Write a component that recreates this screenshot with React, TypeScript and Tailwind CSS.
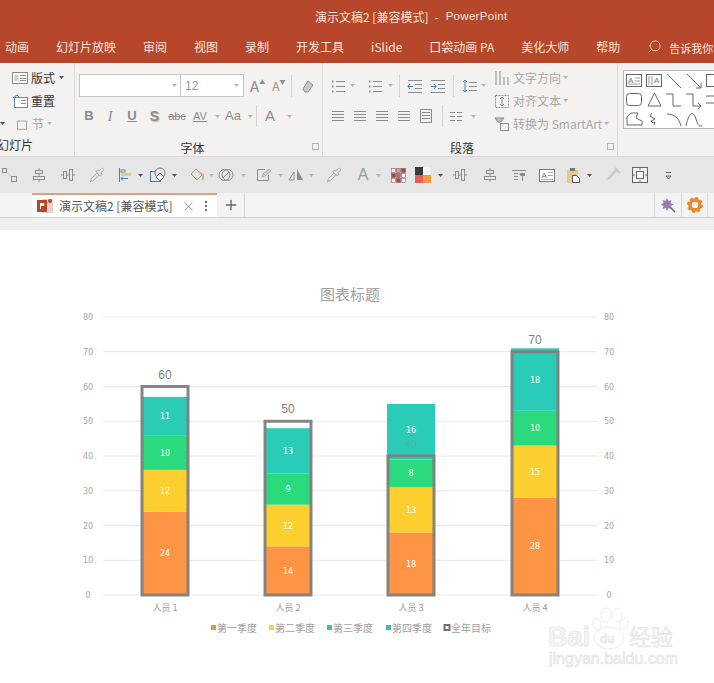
import type { ReactNode } from "react";
import { MoreVertical, Pipette, Plus, Search, X } from "lucide-react";

const CJK = "font-['Noto_Sans_CJK_SC','Liberation_Sans',sans-serif]";

const TABS = ["动画", "幻灯片放映", "审阅", "视图", "录制", "开发工具", "iSlide", "口袋动画 PA", "美化大师", "帮助"];

// ── tiny ribbon glyphs ──
function Glyph({ children, size = 16 }: { children: ReactNode; size?: number }) {
  return (
    <svg width={size} height={size} viewBox="0 0 16 16" fill="none" stroke="#8c8c8c" strokeWidth="1" className="shrink-0">
      {children}
    </svg>
  );
}

function Caret({ dark }: { dark?: boolean }) {
  return (
    <svg width="5" height="3" viewBox="0 0 5 3" className="shrink-0">
      <path d="M0 0h5L2.5 3z" fill={dark ? "#555" : "#b4b4b4"} />
    </svg>
  );
}

function Lines({ x = 2, w = 12, ys = [3, 6, 9, 12] }: { x?: number; w?: number; ys?: number[] }) {
  return <path d={ys.map((y) => `M${x} ${y + 0.5}h${w}`).join("")} />;
}

const AlignIcon = () => (
  <Glyph>
    <Lines />
  </Glyph>
);
const ListIcon = () => (
  <Glyph>
    <path d="M6 3.5h9M6 8.5h9M6 13.5h9" />
    <path d="M2 3.5h1.5M2 8.5h1.5M2 13.5h1.5" strokeWidth="2" />
  </Glyph>
);
const IndentIcon = ({ flip }: { flip?: boolean }) => (
  <Glyph>
    <path d="M1 2.5h14M8 6.5h7M8 10.5h7M1 14.5h14" />
    <path d={flip ? "M1 8.5h5M4 6l2 2.5L4 11" : "M6 8.5H1M3 6L1 8.5 3 11"} stroke="#4a7fa8" />
  </Glyph>
);
const BoxDots = () => (
  <Glyph>
    <rect x="0.500" y="1.500" width="4" height="4" />
    <rect x="9.500" y="9.500" width="5" height="5" />
    <path d="M5 6l4 3" stroke="#c8c8c8" />
  </Glyph>
);
const AlignCenterV = () => (
  <Glyph>
    <path d="M8 1v14" />
    <rect x="4.500" y="3.500" width="7" height="3" fill="#e6e6e6" />
    <rect x="2.500" y="9.500" width="11" height="3" fill="#e6e6e6" />
  </Glyph>
);
const AlignCenterH = () => (
  <Glyph>
    <path d="M1 8h14" />
    <rect x="3.500" y="4.500" width="3" height="7" fill="#e6e6e6" />
    <rect x="9.500" y="2.500" width="3" height="11" fill="#e6e6e6" />
  </Glyph>
);
const Drop = () => <Pipette size={16} strokeWidth={1} color="#8c8c8c" className="shrink-0" />;

function Cell({ w, children }: { w: number | string; children?: ReactNode }) {
  return (
    <div className="flex shrink-0 items-center justify-center gap-[3px]" style={{ width: w }}>
      {children}
    </div>
  );
}

function Sep({ h = "h-[22px]" }: { h?: string }) {
  return <div className={`w-px shrink-0 bg-[#d4d4d4] ${h}`} />;
}

function GroupLabel({ children }: { children: ReactNode }) {
  return (
    <div className="relative mt-[12px] flex h-[17px] items-center justify-center pr-[16px] text-[12px] leading-[17px] text-[#333]">
      {children}
      <span className="absolute right-[3px] top-[4px] h-[7px] w-[7px] border border-[#b5b5b5]" />
    </div>
  );
}

function Ribbon() {
  return (
    <div className={`flex h-[93px] shrink-0 overflow-hidden bg-[#f3f2f1] ${CJK}`}>
      {/* slides group */}
      <div className="relative flex w-[75px] shrink-0 flex-col border-r border-[#d9d9d9] pt-[3px] text-[12px] leading-[23px] text-[#333]">
        <div className="flex h-[23px] shrink-0 items-center gap-1 pl-[12px]">
          <Glyph>
            <rect x="0.500" y="2.500" width="15" height="11" fill="#fff" />
            <rect x="2.500" y="5" width="4" height="6" fill="#ccc" stroke="none" />
            <Lines x={8} w={6} ys={[5, 8, 10]} />
          </Glyph>
          <span className="-ml-[1px]">版式</span>
          <Caret dark />
        </div>
        <div className="flex h-[23px] shrink-0 items-center gap-1 pl-[12px]">
          <Glyph>
            <rect x="2.500" y="4.500" width="13" height="10" fill="#fff" stroke="#5b8fb5" />
            <path d="M1 5l4-3 2 2" stroke="#2f7ab0" />
            <Lines x={9} w={5} ys={[7, 10]} />
          </Glyph>
          <span className="-ml-[1px]">重置</span>
        </div>
        <div className="flex h-[23px] shrink-0 items-center gap-[3px] text-[#a6a6a6]">
          <Caret dark />
          <span className="w-[5px] shrink-0" />
          <Glyph size={12}>
            <rect x="2" y="4" width="12" height="11" />
          </Glyph>
          <span className="ml-[1px]">节</span>
          <Caret />
        </div>
        <div className="-ml-[3px] mt-[1px] h-[18px] text-[12px] leading-[18px]">幻灯片</div>
      </div>

      {/* font group */}
      <div className="flex w-[248px] shrink-0 flex-col border-r border-[#d9d9d9] pl-[4px] pt-[11px]">
        <div className="flex h-[23px] shrink-0 items-center">
          <div className="flex h-[23px] w-[102px] items-center justify-end border border-[#c6c6c6] bg-white pr-[3px]">
            <Caret />
          </div>
          <div className="-ml-px flex h-[23px] w-[64px] items-center justify-between border border-[#c6c6c6] bg-white px-[4px] text-[12px] text-[#999]">
            <span className="font-['Liberation_Sans',sans-serif]">12</span>
            <Caret />
          </div>
          <span className="ml-[6px] text-[15px] leading-none text-[#8c8c8c]">A</span>
          <span className="mb-[8px] text-[6px] text-[#8c8c8c]">▲</span>
          <span className="ml-[7px] text-[12px] leading-none text-[#8c8c8c]">A</span>
          <span className="mb-[8px] text-[6px] text-[#8c8c8c]">▼</span>
          <div className="ml-[6px]">
            <Sep />
          </div>
          <div className="ml-[8px]">
            <Glyph>
              <path d="M3 11L8 3l5 4-5 7H5z" fill="#c9c9c9" />
            </Glyph>
          </div>
        </div>
        <div className="mt-[8px] flex h-[22px] shrink-0 items-center text-[#8c8c8c] font-['Liberation_Sans',sans-serif]">
          <Cell w={20}><span className="text-[13px] font-bold">B</span></Cell>
          <Cell w={22}><span className="font-['Liberation_Serif',serif] text-[14px] italic">I</span></Cell>
          <Cell w={22}><span className="text-[13px] font-bold underline">U</span></Cell>
          <Cell w={23}><span className="text-[14px] font-bold [text-shadow:1px_1px_1px_#bbb]">S</span></Cell>
          <Cell w={22}><span className="text-[11px] line-through">abc</span></Cell>
          <Cell w={24}>
            <span className="text-[11px] leading-[10px] underline">AV</span>
          </Cell>
          <Cell w={10}><Caret /></Cell>
          <Cell w={22}><span className="text-[13px]">Aa</span></Cell>
          <Cell w={12}><Caret /></Cell>
          <Sep />
          <Cell w={26}><span className="text-[15px]">A</span></Cell>
          <Cell w={12}><Caret /></Cell>
        </div>
        <GroupLabel>字体</GroupLabel>
      </div>

      {/* paragraph group */}
      <div className="relative flex w-[295px] shrink-0 flex-col border-r border-[#d9d9d9] pt-[11px]">
        <div className="flex h-[53px] shrink-0">
          <div className="flex w-[171px] shrink-0 flex-col">
            <div className="flex h-[23px] shrink-0 items-center pl-[6px]">
              <Cell w={18}><ListIcon /></Cell>
              <Cell w={10}><Caret /></Cell>
              <Cell w={9} />
              <Cell w={18}><ListIcon /></Cell>
              <Cell w={12}><Caret /></Cell>
              <Cell w={3} />
              <Sep />
              <Cell w={6} />
              <Cell w={18}><IndentIcon /></Cell>
              <Cell w={5} />
              <Cell w={18}><IndentIcon flip /></Cell>
              <Cell w={6} />
              <Sep />
              <Cell w={7} />
              <Cell w={18}>
                <Glyph>
                  <path d="M3 2v12M1 4l2-2 2 2M1 12l2 2 2-2" stroke="#4a7fa8" />
                  <path d="M7 4.500h8M7 8.500h8M7 12.500h8" />
                </Glyph>
              </Cell>
              <Cell w={9}><Caret /></Cell>
            </div>
            <div className="mt-[8px] flex h-[22px] shrink-0 items-center pl-[4px]">
              <Cell w={22}><AlignIcon /></Cell>
              <Cell w={22}><AlignIcon /></Cell>
              <Cell w={22}><AlignIcon /></Cell>
              <Cell w={22}><AlignIcon /></Cell>
              <Cell w={22}>
                <Glyph>
                  <rect x="2.500" y="1.500" width="11" height="13" />
                  <Lines x={4} w={8} ys={[4, 7, 10]} />
                </Glyph>
              </Cell>
              <Cell w={5} />
              <Sep />
              <Cell w={26}>
                <Glyph>
                  <path d="M2 4.500h5M2 8.500h5M2 12.500h5M9 4.500h5M9 8.500h5M9 12.500h5" />
                </Glyph>
              </Cell>
              <Cell w={8}><Caret /></Cell>
            </div>
          </div>
          <div className="-mt-[8px] flex h-[69px] shrink-0 flex-col text-[12px] text-[#a6a6a6]">
            <div className="flex h-[23px] shrink-0 items-center gap-[2px]">
              <Glyph>
                <path d="M2 1v14M6 1v14M10 7v8M14 7v8" />
              </Glyph>
              <span className="ml-[1px] whitespace-nowrap">文字方向</span>
              <Caret />
            </div>
            <div className="flex h-[23px] shrink-0 items-center gap-[2px]">
              <Glyph>
                <rect x="1.500" y="2.500" width="13" height="12" strokeDasharray="2 1" />
                <path d="M8 4v9M6 6l2-2 2 2M6 11l2 2 2-2" />
              </Glyph>
              <span className="ml-[1px] whitespace-nowrap">对齐文本</span>
              <Caret />
            </div>
            <div className="flex h-[23px] shrink-0 items-center gap-[2px]">
              <Glyph>
                <path d="M1 2h9l-3 4H4z" fill="#bdbdbd" />
                <rect x="6.500" y="7.500" width="8" height="7" />
              </Glyph>
              <span className="ml-[1px] whitespace-nowrap">转换为 SmartArt</span>
              <Caret />
            </div>
          </div>
        </div>
        <GroupLabel>段落</GroupLabel>
      </div>

      {/* shapes gallery */}
      <div className="pl-[5px] pt-[7px]">
        <div className="h-[59px] w-[100px] border border-[#b8b8b8] bg-white">
          <svg width="98" height="57" viewBox="0 0 98 57" fill="none" stroke="#666" strokeWidth="1" className="block">
            <rect x="2.500" y="3.500" width="15" height="12" />
            <text x="4" y="12" fontSize="8" fontFamily="'Liberation Sans', sans-serif" fill="#4a7fa8" stroke="none">A</text>
            <path d="M11 7h5M11 10h5M4 13h12" stroke="#999" />
            <rect x="22.500" y="3.500" width="15" height="12" />
            <path d="M25 5v9M28 5v9" stroke="#999" />
            <text x="30" y="12" fontSize="8" fontFamily="'Liberation Sans', sans-serif" fill="#4a7fa8" stroke="none">A</text>
            <path d="M43 3l14 14M63 3l14 14M72 17h5v-5" />
            <rect x="82.500" y="3.500" width="15" height="12" />
            <rect x="2.500" y="22.500" width="15" height="12" rx="3" />
            <path d="M24 35l6.500-13L37 35zM42 23h7v12h8M62 23h7v12h8M74 32l3 3-3 3M82 25h15M82 32h15" />
            <path d="M3 54V46l4-4h7l-2 5 6 3v4zM28 42l-2 3 5 3-4 2 2 2 2-1-1 3" />
            <path d="M43 43c7 0 12 4 14 12M62 55c3-15 8-15 10-7s4 7 6 7" />
          </svg>
        </div>
      </div>
    </div>
  );
}

// ── quick-access bar: [centre x, glyph] pairs, the spacing in the picture is irregular ──
const QUICK: [number, ReactNode][] = [
  [10, <BoxDots />],
  [39, <AlignCenterV />],
  [68, <AlignCenterH />],
  [97, <Drop />],
  [125, (
    <Glyph>
      <path d="M2.500 1v14" stroke="#4a7fa8" />
      <rect x="4" y="3" width="4" height="2" fill="#fff" stroke="#888" />
      <rect x="4" y="6" width="10" height="3" fill="#e5c98a" stroke="none" />
      <path d="M11 11.500H4M6 9.500l-2 2 2 2" stroke="#4a7fa8" />
    </Glyph>
  )],
  [140, <Caret dark />],
  [158, (
    <Glyph>
      <rect x="0.500" y="4.500" width="10" height="10" stroke="#4a7fa8" />
      <circle cx="10" cy="6" r="5" fill="#e6e6e6" stroke="#777" />
      <path d="M10 6l4 4-4 4-4-4z" fill="#fff" stroke="#4a7fa8" />
    </Glyph>
  )],
  [174, <Caret dark />],
  [197, (
    <Glyph>
      <path d="M2 7l5-5 6 6-5 5z" fill="#e6e6e6" />
      <path d="M10 5l4 3v5" stroke="#d8b36b" strokeWidth="2" />
    </Glyph>
  )],
  [211, <Caret />],
  [226, (
    <Glyph>
      <circle cx="6.500" cy="8" r="5.500" />
      <circle cx="9.500" cy="8" r="5.500" />
      <path d="M5 11l6-6" />
    </Glyph>
  )],
  [243, <Caret />],
  [264, (
    <Glyph>
      <path d="M9 2.500H1.500v11h11V8" />
      <path d="M6 10l1-3 6-5 2 2-6 5z" fill="#cfcfcf" stroke="#aaa" />
    </Glyph>
  )],
  [280, <Caret />],
  [296, (
    <Glyph>
      <path d="M1 13l5-8v8z" />
      <path d="M9 2l6 11H9z" fill="#8c8c8c" stroke="none" />
    </Glyph>
  )],
  [311, <Caret />],
  [334, <Drop />],
  [363, <span className="font-['Liberation_Sans',sans-serif] text-[16px] leading-none text-[#9a9a9a]">A</span>],
  [378, <Caret />],
  [398, (
    <svg width="15" height="15" viewBox="0 0 15 15" className="shrink-0">
      {["#fff", "#c9a3a3", "#a24a4a", "#a24a4a", "#b56a6a", "#fff", "#fff", "#a24a4a", "#fff"].map((c, i) => (
        <rect key={i} x={(i % 3) * 5 + 0.5} y={Math.floor(i / 3) * 5 + 0.5} width="4" height="4" fill={c} stroke="#9a5a5a" strokeWidth="0.6" />
      ))}
    </svg>
  )],
  [423, (
    <svg width="16" height="16" viewBox="0 0 16 16" className="shrink-0">
      <rect width="8" height="8" fill="#3a3a3a" />
      <rect x="8" width="8" height="8" fill="#f3f3f3" />
      <rect y="8" width="8" height="8" fill="#ee5a5a" />
      <rect x="8" y="8" width="8" height="8" fill="#f09a3e" />
    </svg>
  )],
  [440, <Caret dark />],
  [460, <AlignCenterH />],
  [490, <AlignCenterV />],
  [519, (
    <Glyph>
      <path d="M1 3.500h14M3 6.500h4M3 9.500h4M3 12.500h4" />
      <path d="M9 6h5v3h-2v5h-1V9a2 2 0 0 1-2-3z" fill="#8c8c8c" stroke="none" />
    </Glyph>
  )],
  [547, (
    <svg width="16" height="13" viewBox="0 0 16 13" fill="none" stroke="#777" className="shrink-0">
      <rect x="0.500" y="0.500" width="15" height="12" fill="#fff" />
      <text x="2.500" y="9" fontSize="8" fontFamily="'Liberation Sans', sans-serif" fill="#4a7fa8" stroke="none">A</text>
      <path d="M9 3.500h5M9 6.500h5M2 10.500h12" stroke="#aaa" />
    </svg>
  )],
  [574, (
    <Glyph>
      <rect x="1" y="3" width="11" height="13" fill="#e5c98a" stroke="none" />
      <rect x="4" y="1" width="5" height="3" fill="#777" stroke="none" />
      <path d="M6.500 8.500h4l3 3v4h-7z" fill="#fff" stroke="#555" />
    </Glyph>
  )],
  [589, <Caret dark />],
  [613, (
    <Glyph>
      <path d="M2 13l3-1 7-8-2-2-7 8z" fill="#cdcdcd" stroke="none" />
      <path d="M10 1l5 5" stroke="#c4c4c4" strokeWidth="2" />
    </Glyph>
  )],
  [640, (
    <Glyph>
      <rect x="0.500" y="0.500" width="15" height="15" fill="#f5f5f5" stroke="#666" />
      <rect x="4.500" y="4.500" width="7" height="7" stroke="#666" />
      <path d="M8 1v2M8 13v2M1 8h2M13 8h2" stroke="#666" />
    </Glyph>
  )],
  [668, (
    <svg width="7" height="9" viewBox="0 0 7 9" fill="none" stroke="#666" className="shrink-0">
      <path d="M1 1.500h5M1 5h5L3.500 8z" />
    </svg>
  )],
];

function QuickBar() {
  return (
    <div className="flex h-[37px] shrink-0 items-center border-t border-[#d6d6d6] bg-[#e6e6e6]">
      {QUICK.map(([at, glyph], i) => {
        const prev = i === 0 ? 0 : QUICK[i - 1][0] + 8;
        return (
          <div key={at} className="flex w-[16px] shrink-0 items-center justify-center" style={{ marginLeft: at - 8 - prev }}>
            {glyph}
          </div>
        );
      })}
    </div>
  );
}

function TabStrip() {
  return (
    <div className="flex h-[25px] shrink-0 items-stretch border-b border-[#d0d0d0] bg-[#f3f3f3]">
      <div className="ml-[32px] flex w-[185px] shrink-0 items-center border-t-2 border-[#e0a080] bg-white pl-[5px]">
        <svg width="16" height="16" viewBox="0 0 16 16" className="shrink-0">
          <rect x="5" y="1" width="11" height="14" fill="#e9cfc6" />
          <rect x="0" y="2" width="10" height="12" fill="#b7472a" />
          <path d="M3 5h3a1.500 1.500 0 0 1 0 3H4v3H3z" fill="#fff" />
          <circle cx="13" cy="3" r="2" fill="#b7472a" />
        </svg>
        <span className={`ml-[6px] whitespace-nowrap text-[12px] text-[#555] ${CJK}`}>演示文稿2 [兼容模式]</span>
        <X size={15} strokeWidth={1} color="#666" className="ml-[9px] shrink-0" />
        <MoreVertical size={14} strokeWidth={2} color="#666" className="ml-[3px] shrink-0" />
      </div>
      <div className="flex w-[28px] shrink-0 items-center justify-center border-r border-[#d0d0d0]">
        <Plus size={16} strokeWidth={2} color="#666" />
      </div>
      <div className="flex-1" />
      <div className="flex w-[27px] shrink-0 items-center justify-center border-l border-[#d8d8d8]">
        <svg width="16" height="16" viewBox="0 0 16 16">
          <path d="M7 1l1.500 3 3-1-1 3 3 1.500-3 1.500 1 3-3-1L7 14l-1.500-3-3 1 1-3L1 7.500 3.500 6l-1-3 3 1z" fill="#9a7bb5" />
          <path d="M10 10l5 5" stroke="#666" strokeWidth="1.500" />
        </svg>
      </div>
      <div className="flex w-[27px] shrink-0 items-center justify-center border-x border-[#d8d8d8]">
        <svg width="16" height="16" viewBox="0 0 16 16">
          <circle cx="8" cy="8" r="5" fill="none" stroke="#e8892c" strokeWidth="3.500" />
          <circle cx="8" cy="8" r="7" fill="none" stroke="#e8892c" strokeWidth="2" strokeDasharray="3 2.500" />
        </svg>
      </div>
      <div className="w-[6px] shrink-0" />
    </div>
  );
}

// ── chart ──
const Y0 = 595;
const UNIT = 3.475;
const COLORS = ["#fe9544", "#fdcf2e", "#2ada7c", "#2accb8"];
const PEOPLE = [
  { name: "人员 1", cx: 165, values: [24, 12, 10, 11], target: 60 },
  { name: "人员 2", cx: 288, values: [14, 12, 9, 13], target: 50 },
  { name: "人员 3", cx: 411, values: [18, 13, 8, 16], target: 40 },
  { name: "人员 4", cx: 535, values: [28, 15, 10, 18], target: 70 },
];
const LEGEND = [
  { label: "第一季度", x: 211, c: "#d49a5c" },
  { label: "第二季度", x: 269, c: "#f2d24b" },
  { label: "第三季度", x: 327, c: "#3cc48a" },
  { label: "第四季度", x: 386, c: "#3bbba8" },
];
const NUM = "'DejaVu Sans', sans-serif";
const HAN = "'Noto Sans CJK SC', sans-serif";
const ARIAL = "'Liberation Sans', sans-serif";

function Chart() {
  const TOP = 230;
  return (
    <svg width="714" height="453" viewBox={`0 ${TOP} 714 453`} className="block shrink-0 bg-white">
      <text x="350" y="300" textAnchor="middle" fontSize="15" fill="#a0a0a0" fontFamily={HAN}>
        图表标题
      </text>
      {[0, 10, 20, 30, 40, 50, 60, 70, 80].map((v) => {
        const y = Y0 - v * UNIT;
        return (
          <g key={v}>
            <path d={`M103 ${y}H597`} stroke="#e8e6ea" strokeWidth="1" />
            <text x="88" y={y + 3} textAnchor="middle" fontSize="8" fill="#a6a6a6" fontFamily={NUM}>{v}</text>
            <text x="609" y={y + 3} textAnchor="middle" fontSize="8" fill="#a6a6a6" fontFamily={NUM}>{v}</text>
          </g>
        );
      })}
      {PEOPLE.map((p) => {
        let acc = 0;
        // person 3 overshoots the target by a whole segment, so its label sits inside the teal
        const buried = p.target === 40;
        return (
          <g key={p.name}>
            {p.values.map((v, i) => {
              const y = Y0 - (acc + v) * UNIT;
              acc += v;
              return (
                <g key={i}>
                  <rect x={p.cx - 24} y={y} width="48" height={v * UNIT} fill={COLORS[i]} />
                  <text x={p.cx} y={y + (v * UNIT) / 2 + (buried && i === 3 ? 1 : 3)} textAnchor="middle" fontSize="8" fill="#fff" fontFamily={NUM}>{v}</text>
                </g>
              );
            })}
            <rect
              x={p.cx - 23}
              y={Y0 - p.target * UNIT}
              width="46"
              height={p.target * UNIT}
              fill="none"
              stroke="#7f7f7f"
              strokeWidth="3"
              opacity="0.95"
            />
            <text
              x={p.cx}
              y={Y0 - p.target * UNIT - 8}
              textAnchor="middle"
              fontSize={buried ? 10 : 12}
              fill={buried ? "#52b0a6" : "#808080"}
              fontFamily={ARIAL}
            >
              {p.target}
            </text>
            <text x={p.cx} y="611" textAnchor="middle" fontSize="9" fill="#999" fontFamily={HAN}>{p.name}</text>
          </g>
        );
      })}
      {LEGEND.map((l) => (
        <g key={l.label}>
          <rect x={l.x} y="625" width="5" height="5" fill={l.c} />
          <text x={l.x + 6} y="632" fontSize="10" fill="#a0a0a0" fontFamily={HAN}>{l.label}</text>
        </g>
      ))}
      <rect x="444.500" y="625" width="5" height="5" fill="#fff" stroke="#707070" strokeWidth="2" />
      <text x="451" y="632" fontSize="10" fill="#a0a0a0" fontFamily={HAN}>全年目标</text>

      {/* Baidu watermark */}
      <g fill="#fff" stroke="#e6e6e6" strokeWidth="0.800">
        <ellipse cx="609" cy="638" rx="15" ry="11" />
        <ellipse cx="597" cy="624" rx="4" ry="6" transform="rotate(-15 597 624)" />
        <ellipse cx="606" cy="615" rx="5" ry="7" />
        <ellipse cx="617" cy="615" rx="5" ry="7" />
        <ellipse cx="624" cy="624" rx="4" ry="6" transform="rotate(15 624 624)" />
      </g>
      <g fill="#f4f4f4" stroke="#e2e2e2" strokeWidth="0.600">
        <text x="548" y="646" fontSize="27" fontWeight="700" fontFamily={ARIAL}>Bai</text>
        <text x="600" y="643" fontSize="12" fontWeight="700" fontFamily={ARIAL}>du</text>
        <text x="629" y="645" fontSize="22" fontFamily={HAN}>经验</text>
        <text x="549" y="664" fontSize="16" fontFamily={ARIAL}>jingyan.baidu.com</text>
      </g>
    </svg>
  );
}

export default function App() {
  return (
    <div className="flex h-[683px] w-[714px] flex-col overflow-hidden bg-white">
      <div className={`flex h-[32px] shrink-0 items-center bg-[#b7472a] pl-[315px] pt-[1px] text-[12px] whitespace-nowrap text-[#f6e4de] ${CJK}`}>
        <span>演示文稿2 [兼容模式]</span>
        <span className="ml-[6px]">-</span>
        <span className="ml-[7px] font-['Liberation_Sans',sans-serif] text-[11.500px] tracking-[0.3px]">PowerPoint</span>
      </div>
      <div className={`flex h-[31px] shrink-0 items-center gap-[27px] overflow-hidden bg-[#b7472a] pb-[2px] pl-[5px] text-[12px] whitespace-nowrap text-[#f6e4de] ${CJK}`}>
        {TABS.map((t) => (
          <span key={t}>{t}</span>
        ))}
        <span className="flex items-center gap-[7px]">
          <Search size={15} strokeWidth={1.2} className="-scale-x-100" />
          <span className="mt-[4px] text-[11px]">告诉我你</span>
        </span>
      </div>
      <Ribbon />
      <QuickBar />
      <TabStrip />
      <div className="h-[12px] shrink-0 bg-[#f0f0f0]" />
      <Chart />
    </div>
  );
}
